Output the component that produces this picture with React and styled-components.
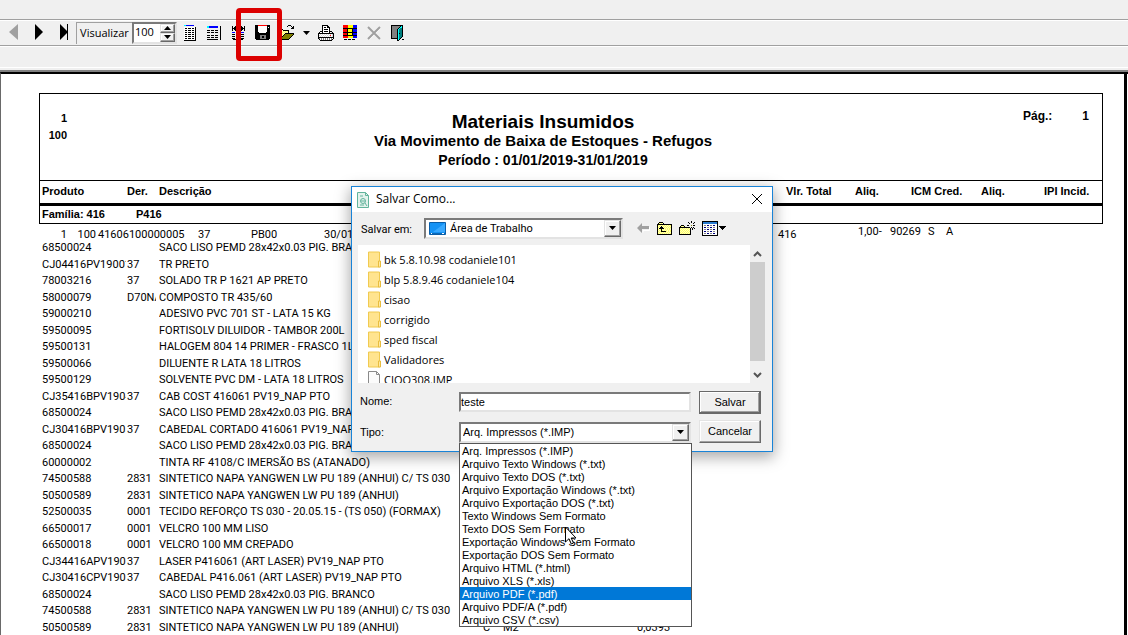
import React, { useState } from "react";
import styled, { createGlobalStyle, css } from "styled-components";

const GlobalStyle = createGlobalStyle`
  * {
    box-sizing: border-box;
  }
  body {
    background: #f0f0f0;
    color: #000;
    font-family: "Liberation Sans", Arial, sans-serif;
    font-size: 11px;
    margin: 0;
    overflow: hidden;
  }
  button,
  input,
  select {
    color: inherit;
    font-family: inherit;
    font-size: inherit;
  }
`;

const uiFont = css`
  font-family: "Open Sans", "Segoe UI", sans-serif;
`;

const textFont = css`
  font-family: Roboto, Arial, sans-serif;
`;

const sunken = css`
  background-color: #fff;
  border: 2px solid;
  border-color: #7a7a7a #e3e3e3 #e3e3e3 #7a7a7a;
`;

const raised = css`
  background-color: #f0f0f0;
  border: 1px solid;
  border-color: #e3e3e3 #696969 #696969 #e3e3e3;
  box-shadow: inset -1px -1px 0 #a0a0a0, inset 1px 1px 0 #fff;
`;

const Window = styled.div`
  display: flex;
  flex-direction: column;
  height: 100vh;
  position: relative;
`;

const Toolbar = styled.div`
  align-items: center;
  border-bottom: 1px solid #a0a0a0;
  border-top: 1px solid #a0a0a0;
  box-shadow: inset 0 1px 0 #fff, 0 1px 0 #fff;
  display: flex;
  flex: none;
  height: 27px;
  margin-top: 19px;
  padding-left: 2px;
`;

const ToolButton = styled.button`
  align-items: center;
  background: none;
  border: none;
  display: flex;
  height: 25px;
  justify-content: center;
  padding: 0;
  width: ${(props) => props.$width || 24}px;
`;

const ViewLabel = styled.label`
  ${uiFont}
  border-left: 1px solid #a0a0a0;
  border-top: 1px solid #a0a0a0;
  height: 22px;
  line-height: 20px;
  text-align: center;
  width: 56px;
`;

const ZoomBox = styled.div`
  ${sunken}
  display: flex;
  height: 22px;
  margin-right: 1px;
  width: 45px;
`;

const ZoomInput = styled.input`
  ${uiFont}
  background: none;
  border: none;
  flex: 1;
  line-height: 16px;
  min-width: 0;
  outline: none;
  padding: 0 0 2px 1px;
`;

const Spinner = styled.div`
  display: flex;
  flex-direction: column;
  width: 15px;
`;

const SpinButton = styled.button`
  ${raised}
  align-items: center;
  display: flex;
  flex: 1;
  justify-content: center;
  padding: 0;
`;

const Highlight = styled.div`
  border: 5px solid #dc0000;
  border-radius: 4px;
  height: 53px;
  left: 236px;
  position: absolute;
  top: 8px;
  width: 46px;
  z-index: 2;
`;

const Ruler = styled.div`
  border-bottom: 2px solid #808080;
  flex: none;
  height: 26px;
  padding-top: 21px;
`;

const RulerLine = styled.div`
  background: #fff;
  height: 1px;
`;

const Paper = styled.div`
  background: #fff;
  border-left: 1px solid #696969;
  border-top: 2px solid #000;
  flex: 1;
  overflow: hidden;
  padding-right: 1px;
`;

const Sheet = styled.main`
  border-right: 3px solid #000;
  min-height: 100%;
  padding: 19px 21px 0 38px;
`;

const ReportHead = styled.header`
  border: 1px solid #000;
  border-bottom: none;
  display: grid;
  font-weight: 700;
  grid-template-columns: 140px 1fr 140px;
  height: 87px;
`;

const CompanyCodes = styled.div`
  line-height: 17px;
  padding-top: 16px;
  text-align: right;
  width: 27px;
`;

const Titles = styled.div`
  padding: 18px 56px 0 0;
  text-align: center;
  white-space: nowrap;
`;

const Title = styled.h1`
  font-size: 19px;
  line-height: 20px;
  margin: 0;
`;

const Subtitle = styled.h2`
  font-size: 15px;
  line-height: 17px;
  margin: 0;
`;

const Period = styled.p`
  font-size: 14px;
  line-height: 22px;
  margin: 0;
`;

const PageNumber = styled.div`
  display: flex;
  font-size: 12px;
  gap: 30px;
  justify-content: flex-end;
  line-height: 16px;
  padding: 14px 13px 0 0;
`;

const Report = styled.table`
  border-collapse: separate;
  border-spacing: 0;
  table-layout: fixed;
  width: 100%;
`;

const HeadCell = styled.th`
  border-bottom: 3px solid #000;
  border-top: 1px solid #000;
  height: 26px;
  padding: 0 0 2px;
  text-align: left;
  vertical-align: middle;
  white-space: nowrap;
  &:first-child {
    border-left: 1px solid #000;
    padding-left: 2px;
  }
  &:last-child {
    border-right: 1px solid #000;
  }
`;

const FamilyCell = styled.td`
  border: 1px solid #000;
  border-top: none;
  font-weight: 700;
  height: 18px;
  padding: 0 0 2px 2px;
`;

const FamilyLine = styled.div`
  display: flex;
  gap: 31px;
`;

const MovementLine = styled.div`
  display: grid;
  grid-template-columns: 25px 29px 102px 53px 73px 1fr 80px 32px 38px 18px 157px;
  height: 16px;
  line-height: 21px;
  span:nth-child(-n + 2) {
    text-align: right;
  }
  span:nth-child(3) {
    padding-left: 2px;
  }
  span:nth-child(n + 8) {
    line-height: 16px;
  }
`;

const MaterialRow = styled.tr`
  height: ${(props) => (props.$tall ? 17 : 16)}px;
`;

const Cell = styled.td`
  ${textFont}
  line-height: 16px;
  overflow: hidden;
  padding: 0;
  white-space: nowrap;
  &:first-child {
    padding-left: 3px;
  }
`;

const Clip = styled.div`
  overflow: hidden;
  width: ${(props) => props.$width}px;
`;

const Dialog = styled.section`
  background: #f0f0f0;
  border: 1px solid #1883d7;
  box-shadow: 0 4px 14px 1px rgba(0, 0, 0, 0.35);
  height: 266px;
  left: 351px;
  position: absolute;
  top: 186px;
  width: 422px;
  z-index: 3;
`;

const TitleBar = styled.div`
  ${uiFont}
  align-items: center;
  background: #fff;
  display: flex;
  font-size: 12px;
  gap: 7px;
  height: 25px;
  padding: 0 9px 0 5px;
`;

const DialogTitle = styled.div`
  flex: 1;
  line-height: 24px;
  padding-bottom: 1px;
`;

const CloseButton = styled.button`
  background: none;
  border: none;
  display: flex;
  padding: 0 0 1px;
`;

const PlaceRow = styled.div`
  align-items: center;
  display: flex;
  height: 33px;
  padding: 0 8px 1px 9px;
`;

const PlaceLabel = styled.label`
  ${textFont}
  line-height: 15px;
  padding-top: 2px;
  width: 63px;
`;

const ComboBox = styled.div`
  ${sunken}
  align-items: center;
  display: flex;
  height: 21px;
  padding-left: ${(props) => props.$pad || 0}px;
  width: ${(props) => props.$width};
`;

const ComboSelect = styled.select`
  appearance: none;
  background: none;
  border: none;
  flex: 1;
  height: 17px;
  line-height: 17px;
  min-width: 0;
  outline: none;
  padding: 0 0 0 2px;
`;

const PlaceSelect = styled(ComboSelect)`
  ${textFont}
  padding-left: 4px;
`;

const ComboArrow = styled.span`
  ${raised}
  align-items: center;
  display: flex;
  height: 17px;
  justify-content: center;
  width: 17px;
`;

const PlaceTools = styled.div`
  align-items: center;
  display: flex;
  gap: 7px;
  margin-left: 14px;
`;

const PlaceTool = styled.button`
  background: none;
  border: none;
  display: flex;
  padding: 0;
`;

const FilePane = styled.div`
  background: #fff;
  display: flex;
  height: 138px;
  margin: 0 7px 0 6px;
`;

const FileList = styled.ul`
  ${uiFont}
  flex: 1;
  list-style: none;
  margin: 0;
  overflow: hidden;
  padding: 4px 0 0 10px;
`;

const FileItem = styled.li`
  align-items: center;
  display: flex;
  gap: 3px;
  height: 20px;
`;

const ScrollBar = styled.div`
  align-items: center;
  background: #f0f0f0;
  display: flex;
  flex-direction: column;
  width: 15px;
`;

const ScrollArrow = styled.span`
  align-items: center;
  display: flex;
  height: 17px;
`;

const ScrollThumb = styled.div`
  background: #cdcdcd;
  height: 99px;
  margin-bottom: auto;
  width: 15px;
`;

const DialogFooter = styled.div`
  display: flex;
  gap: 8px;
  padding: 8px 11px 0 8px;
`;

const Fields = styled.div`
  display: grid;
  flex: 1;
  gap: 9px 0;
  grid-template-columns: 99px 1fr;
`;

const FieldLabel = styled.label`
  line-height: 20px;
`;

const NameInput = styled.input`
  ${sunken}
  height: 20px;
  margin-top: 1px;
  outline: none;
  padding: 0;
  width: 100%;
`;

const Actions = styled.div`
  display: flex;
  flex-direction: column;
  gap: 6px;
  width: 62px;
`;

const DialogButton = styled.button`
  ${raised}
  height: 23px;
  padding: 0 0 1px;
  ${(props) =>
    props.$default &&
    css`
      border-color: #696969;
      box-shadow: inset -1px -1px 0 #696969, inset 1px 1px 0 #fff,
        inset -2px -2px 0 #a0a0a0;
    `}
`;

const TypeField = styled.div`
  position: relative;
`;

const Options = styled.ul`
  background: #fff;
  border: 1px solid #555;
  left: 0;
  list-style: none;
  margin: 0;
  padding: 0;
  position: absolute;
  top: 21px;
  width: 233px;
`;

const Option = styled.li`
  background: ${(props) => (props.$active ? "#0078d7" : "#fff")};
  color: ${(props) => (props.$active ? "#fff" : "#000")};
  height: 13px;
  line-height: 14px;
  padding-left: 2px;
  white-space: nowrap;
`;

const Pointer = styled.svg`
  left: 565px;
  position: absolute;
  top: 526px;
  z-index: 4;
`;

const palette = {
  k: "#000",
  w: "#fff",
  g: "#a0a0a0",
  d: "#808080",
  l: "#d8d8d8",
  b: "#0000ff",
  n: "#000080",
  c: "#00ffff",
  t: "#008080",
  r: "#ff0000",
  y: "#ffff00",
  e: "#ffff66",
  p: "#ffffc0",
  o: "#808000",
  s: "#2a7bd0",
};

// every character is one pixel, a dot is transparent
const PixelIcon = ({ rows }) => (
  <svg
    width={rows[0].length}
    height={rows.length}
    shapeRendering="crispEdges"
    aria-hidden="true"
  >
    {rows.map((row, y) =>
      [...row].map(
        (ch, x) =>
          palette[ch] && (
            <rect
              key={`${x}-${y}`}
              x={x}
              y={y}
              width="1"
              height="1"
              fill={palette[ch]}
            />
          )
      )
    )}
  </svg>
);

const listIcon = [
  "ccbbbbbbbb..",
  "............",
  "wwwwwwwwwwwk",
  "wkkwkkkwkkwk",
  "wwwwwwwwwwwk",
  "wkkwkkkwkkwk",
  "wwwwwwwwwwwk",
  "wkkwkkkwkkwk",
  "wwwwwwwwwwwk",
  "wkkwkkkwkkwk",
  "wwwwwwwwwwwk",
  "wkkwkkkwkkwk",
  "wwwwwwwwwwwk",
  "wkkwkkkwkkwk",
  "wwwwwwwwwwwk",
  "kkkkkkkkkkkk",
];

const columnsIcon = [
  "ccbbbbbbbbb..k",
  "ccbbbbbbbbb..k",
  ".............k",
  ".............k",
  "kkk.kkk.kkk..k",
  ".............k",
  "kkk.kkk.kkk..k",
  ".............k",
  ".............k",
  "kkk.kkk.kkk..k",
  ".............k",
  "kkk.kkk.kkk..k",
  ".............k",
  "kkkkkkkkkkk..k",
];

const widthIcon = [
  "k..k.....k..k",
  "k.kk.....kk.k",
  "kkkkkk.kkkkkk",
  "k.kk.....kk.k",
  "k..k.....k..k",
  ".............",
  "bbb.bbbb.bbb.",
  ".............",
  "kkk.kkkk.kkk.",
  ".............",
  "kkk.kkkk.kkk.",
  ".............",
  "kkk.kkkk.kkk.",
  ".kkkkkkkkkk..",
];

const saveIcon = [
  "kkkrrrrrrrrrkkk",
  "kkkwwwwwwwwwkkk",
  "kkkwwwwwwwwwkwk",
  "kkkwwwwwwwwwkkk",
  "kkkwwwwwwwwwkkk",
  "kkkwwwwwwwwwkkk",
  "kkkwwwwwwwwwkkk",
  "kkkkwwwwwwwkkkk",
  "kkkkkkkkkkkkkkk",
  "kkkkkkkkkkkkkkk",
  "kkkkkddddddkkkk",
  "kkkkkddkkddkkkk",
  "kkkkkddkkddkkkk",
  "kkkkkddddddkkkk",
  ".kkkkkkkkkkkkk.",
];

const openIcon = [
  ".........kkk...",
  "........k...k.k",
  ".............kk",
  "............kkk",
  ".kkk...........",
  "keepkkkkkk.....",
  "kpepepepek.....",
  "kepepepepk.....",
  "kpepepkkkkkkkkk",
  "kepepkooooooook",
  "kpepkooooooook.",
  "kepkooooooook..",
  "kpkooooooook...",
  "kkooooooook....",
  "kkkkkkkkkk.....",
];

const printIcon = [
  "....kkkkkk......",
  "....kwwwwkk.....",
  "....kwkkwkkk....",
  "....kwwwwwwk....",
  "....kwkkkkwk....",
  "....kwwwwwwk....",
  "..kkkwkkkkwkkk..",
  ".kwwkwwwwwwkwlk.",
  "kkkkkkkkkkkkkkkk",
  "kwlwlwlwlwlwlwlk",
  "klwlwlwlwlwlrwlk",
  "kwlwlwlwlwlwlwlk",
  "kkkkkkkkkkkkkkkk",
  "kdwdwdwdwdwdwdwk",
  ".kwdwdwdwdwdwdk.",
  "..kkkkkkkkkkkk..",
];

const colorsIcon = [
  "rrrrryyyyybbbb",
  "rrrrryyyyybbbb",
  "rrrrryyyyybbbb",
  "kkkkkkkkkkkkkk",
  "rrrrkyyyykbbbb",
  "rrrrkyyyykbbbb",
  "rrrrkyyyykbbbb",
  "kkkkkkkkkkkkkk",
  "rrrrkyyyykbbbb",
  "rrrrkyyyykbbbb",
  "kkkkkkkkkkkkkk",
  "rrrrryyyyybbbb",
  "rrrrryyyyybbbb",
  "..............",
  ".kkk.kkk.kkk..",
];

const exitIcon = [
  "kkkkkkkkkkkk..",
  "kddddddddkck..",
  "kdddddddkcck..",
  "kddddddkcttk..",
  "kdddddkctttk..",
  "kdddddkctttk..",
  "kdddddkctttk..",
  "kdddddkctttk..",
  "kdddddkckttk..",
  "kdddddkctttk..",
  "kdddddkctttk..",
  "kdddddkctttk..",
  "kdddddkcttk...",
  "kkkkkkkctk....",
  "......kck..kk.",
  "......kk......",
];

const upIcon = [
  "..kkkk.........",
  ".kepepk........",
  "kkkkkkkkkkkkkkk",
  "kepepepepepepek",
  "kpepkpepepepepk",
  "kepkkkpepepepek",
  "kpkkkkkpepepepk",
  "kepekpepepepepk",
  "kpepkepepepepek",
  "kepekkkkkepepek",
  "kpepepepepepepk",
  "kepepepepepepek",
  "kkkkkkkkkkkkkkk",
];

const newFolderIcon = [
  "............k...",
  ".........k..k..k",
  "..........k...k.",
  "................",
  "..kkk...kk..o.kk",
  ".kepek..........",
  "kkkkkkkkkkk.k.k.",
  "kepepepepepk.k.k",
  "kpepepepepek.k..",
  "kepepepepepk....",
  "kpepepepepek....",
  "kepepepepepk....",
  "kpepepepepek....",
  "kkkkkkkkkkkk....",
];

const viewIcon = [
  "kkkkkkkkkkkkkkkk........",
  "kssssssssssssssk........",
  "kssssssssssssssk........",
  "kwwwwwwwwwwwwwwk........",
  "kwddwnnwddwnnwwk........",
  "kwwwwwwwwwwwwwwk.kkkkkkk",
  "kwnnwddwnnwddwwk..kkkkk.",
  "kwwwwwwwwwwwwwwk...kkk..",
  "kwddwnnwddwnnwwk....k...",
  "kwwwwwwwwwwwwwwk........",
  "kwnnwddwnnwddwwk........",
  "kwwwwwwwwwwwwwwk........",
  "kwddwnnwddwnnwwk........",
  "kwwwwwwwwwwwwwwk........",
  "kkkkkkkkkkkkkkkk........",
];

const Triangle = ({ up }) => (
  <svg width="7" height="4" viewBox="0 0 7 4" aria-hidden="true">
    <path d={up ? "M0 4 3.5 0 7 4z" : "M0 0h7L3.5 4z"} />
  </svg>
);

const PlayIcon = ({ back, last }) => (
  <svg width="10" height="17" viewBox="0 0 10 17" aria-hidden="true">
    <path
      d={back ? "M9 0v16L0 8z" : "M1 0v16l8-8z"}
      fill={back ? "#a0a0a0" : "#000"}
    />
    {last && <path d="M8 0h1v16H8z" />}
  </svg>
);

const FolderIcon = () => (
  <svg width="13" height="17" viewBox="0 0 13 17" aria-hidden="true">
    <path d="M.5 1h11v15H.5z" fill="#ffe48f" stroke="#f0ca50" />
    <path d="M10.5 10h2v6h-2z" fill="#ffe9a2" stroke="#e8bd3f" />
  </svg>
);

const FileIcon = () => (
  <svg width="13" height="17" viewBox="0 0 13 17" aria-hidden="true">
    <path d="M.5.5h8l3 3V17H.5z" fill="#fbfbfb" stroke="#8a8a8a" />
    <path d="M8.5.5v3h3" fill="none" stroke="#8a8a8a" />
  </svg>
);

const materials = [
  ["68500024", "", "SACO LISO PEMD 28x42x0.03 PIG. BRANCO"],
  ["CJ04416PV19001", "37", "TR PRETO"],
  ["78003216", "37", "SOLADO TR P 1621 AP PRETO"],
  ["58000079", "D70NA", "COMPOSTO TR 435/60"],
  ["59000210", "", "ADESIVO PVC 701 ST - LATA 15 KG"],
  ["59500095", "", "FORTISOLV DILUIDOR - TAMBOR 200L"],
  ["59500131", "", "HALOGEM 804 14 PRIMER - FRASCO 1L"],
  ["59500066", "", "DILUENTE R LATA 18 LITROS"],
  ["59500129", "", "SOLVENTE PVC DM - LATA 18 LITROS"],
  ["CJ35416BPV1904", "37", "CAB COST 416061 PV19_NAP PTO"],
  ["68500024", "", "SACO LISO PEMD 28x42x0.03 PIG. BRANCO"],
  ["CJ30416BPV1905", "37", "CABEDAL CORTADO 416061 PV19_NAP PTO"],
  ["68500024", "", "SACO LISO PEMD 28x42x0.03 PIG. BRANCO"],
  ["60000002", "", "TINTA RF 4108/C IMERSÃO BS (ATANADO)"],
  ["74500588", "2831", "SINTETICO NAPA YANGWEN LW PU 189 (ANHUI) C/ TS 030"],
  ["50500589", "2831", "SINTETICO NAPA YANGWEN LW PU 189 (ANHUI)"],
  ["52500035", "0001", "TECIDO REFORÇO TS 030 - 20.05.15 - (TS 050) (FORMAX)"],
  ["66500017", "0001", "VELCRO 100 MM LISO"],
  ["66500018", "0001", "VELCRO 100 MM CREPADO"],
  ["CJ34416APV1905", "37", "LASER P416061 (ART LASER) PV19_NAP PTO"],
  ["CJ30416CPV1905", "37", "CABEDAL P416.061 (ART LASER) PV19_NAP PTO"],
  ["68500024", "", "SACO LISO PEMD 28x42x0.03 PIG. BRANCO"],
  ["74500588", "2831", "SINTETICO NAPA YANGWEN LW PU 189 (ANHUI) C/ TS 030"],
  ["50500589", "2831", "SINTETICO NAPA YANGWEN LW PU 189 (ANHUI)", "C", "M2", "0,0393"],
];

const folders = [
  "bk 5.8.10.98 codaniele101",
  "blp 5.8.9.46 codaniele104",
  "cisao",
  "corrigido",
  "sped fiscal",
  "Validadores",
];

const fileTypes = [
  "Arq. Impressos (*.IMP)",
  "Arquivo Texto Windows (*.txt)",
  "Arquivo Texto DOS (*.txt)",
  "Arquivo Exportação Windows (*.txt)",
  "Arquivo Exportação DOS (*.txt)",
  "Texto Windows Sem Formato",
  "Texto DOS Sem Formato",
  "Exportação Windows Sem Formato",
  "Exportação DOS Sem Formato",
  "Arquivo HTML (*.html)",
  "Arquivo XLS (*.xls)",
  "Arquivo PDF (*.pdf)",
  "Arquivo PDF/A (*.pdf)",
  "Arquivo CSV (*.csv)",
];

const columnWidths = [88, 32, 324, 20, 134, null, 69, 56, 70, 63, 59];

const PreviewToolbar = () => {
  const [zoom, setZoom] = useState(100);

  return (
    <Toolbar>
      <ToolButton aria-label="Anterior">
        <PlayIcon back />
      </ToolButton>
      <ToolButton $width={26} aria-label="Próxima">
        <PlayIcon />
      </ToolButton>
      <ToolButton aria-label="Última">
        <PlayIcon last />
      </ToolButton>
      <ViewLabel htmlFor="zoom">Visualizar</ViewLabel>
      <ZoomBox>
        <ZoomInput
          id="zoom"
          value={zoom}
          onChange={(e) => setZoom(Number(e.target.value) || 0)}
        />
        <Spinner>
          <SpinButton aria-label="Aumentar" onClick={() => setZoom(zoom + 1)}>
            <Triangle up />
          </SpinButton>
          <SpinButton aria-label="Diminuir" onClick={() => setZoom(zoom - 1)}>
            <Triangle />
          </SpinButton>
        </Spinner>
      </ZoomBox>
      <ToolButton aria-label="Página">
        <PixelIcon rows={listIcon} />
      </ToolButton>
      <ToolButton aria-label="Colunas">
        <PixelIcon rows={columnsIcon} />
      </ToolButton>
      <ToolButton aria-label="Largura">
        <PixelIcon rows={widthIcon} />
      </ToolButton>
      <ToolButton aria-label="Salvar">
        <PixelIcon rows={saveIcon} />
      </ToolButton>
      <ToolButton aria-label="Abrir">
        <PixelIcon rows={openIcon} />
      </ToolButton>
      <ToolButton $width={16} aria-label="Recentes">
        <Triangle />
      </ToolButton>
      <ToolButton aria-label="Imprimir">
        <PixelIcon rows={printIcon} />
      </ToolButton>
      <ToolButton aria-label="Cores">
        <PixelIcon rows={colorsIcon} />
      </ToolButton>
      <ToolButton aria-label="Cancelar impressão">
        <svg width="14" height="14" viewBox="0 0 14 14" aria-hidden="true">
          <path d="m2 2 11 11M13 2 2 13" stroke="#fff" strokeWidth="2" />
          <path d="m1 1 12 12M13 1 1 13" stroke="#a0a0a0" strokeWidth="2" />
        </svg>
      </ToolButton>
      <ToolButton aria-label="Sair">
        <PixelIcon rows={exitIcon} />
      </ToolButton>
    </Toolbar>
  );
};

const ReportSheet = () => (
  <Paper>
    <Sheet>
      <ReportHead>
        <CompanyCodes>
          <div>1</div>
          <div>100</div>
        </CompanyCodes>
        <Titles>
          <Title>Materiais Insumidos</Title>
          <Subtitle>Via Movimento de Baixa de Estoques - Refugos</Subtitle>
          <Period>Período : 01/01/2019-31/01/2019</Period>
        </Titles>
        <PageNumber>
          <span>Pág.:</span>
          <span>1</span>
        </PageNumber>
      </ReportHead>
      <Report aria-label="Materiais Insumidos">
        <colgroup>
          {columnWidths.map((width, i) => (
            <col key={i} width={width || undefined} />
          ))}
        </colgroup>
        <thead>
          <tr>
            <HeadCell>Produto</HeadCell>
            <HeadCell>Der.</HeadCell>
            <HeadCell>Descrição</HeadCell>
            <HeadCell />
            <HeadCell />
            <HeadCell />
            <HeadCell>Vlr. Total</HeadCell>
            <HeadCell>Aliq.</HeadCell>
            <HeadCell>ICM Cred.</HeadCell>
            <HeadCell>Aliq.</HeadCell>
            <HeadCell>IPI Incid.</HeadCell>
          </tr>
        </thead>
        <tbody>
          <tr>
            <FamilyCell colSpan={11}>
              <FamilyLine>
                <span>Família: 416</span>
                <span>P416</span>
              </FamilyLine>
            </FamilyCell>
          </tr>
          <tr>
            <Cell colSpan={11}>
              <MovementLine>
                <span>1</span>
                <span>100</span>
                <span>41606100000005</span>
                <span>37</span>
                <span>PB00</span>
                <span>30/01</span>
                <span>416</span>
                <span>1,00-</span>
                <span>90269</span>
                <span>S</span>
                <span>A</span>
              </MovementLine>
            </Cell>
          </tr>
          {materials.map(([code, der, desc, kind, unit, qty], i) => (
            <MaterialRow key={i} $tall={i % 2 === 1}>
              <Cell>
                <Clip $width={84}>{code}</Clip>
              </Cell>
              <Cell>
                <Clip $width={29}>{der}</Clip>
              </Cell>
              <Cell>{desc}</Cell>
              <Cell>{kind}</Cell>
              <Cell>{unit}</Cell>
              <Cell colSpan={6}>{qty}</Cell>
            </MaterialRow>
          ))}
        </tbody>
      </Report>
    </Sheet>
  </Paper>
);

const SaveDialog = () => {
  const [name, setName] = useState("teste");
  const [type, setType] = useState(fileTypes[0]);
  const [active, setActive] = useState(11);

  return (
    <Dialog role="dialog" aria-label="Salvar Como...">
      <TitleBar>
        <svg width="12" height="16" viewBox="0 0 12 16" aria-hidden="true">
          <path d="M.5.5h8l3 3v12H.5z" fill="#e3f2ec" stroke="#62b49c" />
          <path d="M8.5.5v3h3M3 4h3" fill="none" stroke="#62b49c" />
          <circle cx="6" cy="9" r="2.5" fill="none" stroke="#62b49c" />
          <path d="M4 9h4M8 11l2 3M3 13h4" stroke="#62b49c" />
        </svg>
        <DialogTitle>Salvar Como...</DialogTitle>
        <CloseButton aria-label="Fechar">
          <svg width="12" height="12" viewBox="0 0 12 12" aria-hidden="true">
            <path d="m1 1 10 10M11 1 1 11" stroke="#000" />
          </svg>
        </CloseButton>
      </TitleBar>
      <PlaceRow>
        <PlaceLabel htmlFor="place">Salvar em:</PlaceLabel>
        <ComboBox $width="199px" $pad={3}>
          <svg width="17" height="13" viewBox="0 0 17 13" aria-hidden="true">
            <path d="M.5.5h16v12H.5z" fill="#1593f5" stroke="#0a5ea8" />
            <path d="M16 1v9H4z" fill="#39a9ff" />
            <path d="M1 11.5h15" stroke="#0b69b8" />
            <path d="M2 11.5h1M13 11.5h2" stroke="#fff" />
          </svg>
          <PlaceSelect id="place" defaultValue="desktop">
            <option value="desktop">Área de Trabalho</option>
          </PlaceSelect>
          <ComboArrow>
            <Triangle />
          </ComboArrow>
        </ComboBox>
        <PlaceTools>
          <PlaceTool aria-label="Voltar">
            <svg width="13" height="10" viewBox="0 0 13 10" aria-hidden="true">
              <path d="M6 9.5v-2h6.5V4" fill="none" stroke="#fff" />
              <path d="M0 5l5-5v3h7v3H5v4z" fill="#a0a0a0" />
            </svg>
          </PlaceTool>
          <PlaceTool aria-label="Um nível acima">
            <PixelIcon rows={upIcon} />
          </PlaceTool>
          <PlaceTool aria-label="Nova pasta">
            <PixelIcon rows={newFolderIcon} />
          </PlaceTool>
          <PlaceTool aria-label="Exibir">
            <PixelIcon rows={viewIcon} />
          </PlaceTool>
        </PlaceTools>
      </PlaceRow>
      <FilePane>
        <FileList>
          {folders.map((folder) => (
            <FileItem key={folder}>
              <FolderIcon />
              {folder}
            </FileItem>
          ))}
          <FileItem>
            <FileIcon />
            CIOO308.IMP
          </FileItem>
        </FileList>
        <ScrollBar>
          <ScrollArrow>
            <svg width="9" height="6" viewBox="0 0 9 6" aria-hidden="true">
              <path d="M1 5l3.5-3.5L8 5" fill="none" stroke="#555" strokeWidth="2" />
            </svg>
          </ScrollArrow>
          <ScrollThumb />
          <ScrollArrow>
            <svg width="9" height="6" viewBox="0 0 9 6" aria-hidden="true">
              <path d="M1 1l3.5 3.5L8 1" fill="none" stroke="#555" strokeWidth="2" />
            </svg>
          </ScrollArrow>
        </ScrollBar>
      </FilePane>
      <DialogFooter>
        <Fields>
          <FieldLabel htmlFor="name">Nome:</FieldLabel>
          <NameInput
            id="name"
            value={name}
            onChange={(e) => setName(e.target.value)}
          />
          <FieldLabel htmlFor="type">Tipo:</FieldLabel>
          <TypeField>
            <ComboBox $width="100%">
              <ComboSelect
                id="type"
                value={type}
                onChange={(e) => setType(e.target.value)}
              >
                {fileTypes.map((item) => (
                  <option key={item}>{item}</option>
                ))}
              </ComboSelect>
              <ComboArrow>
                <Triangle />
              </ComboArrow>
            </ComboBox>
            <Options role="listbox" aria-label="Tipo">
              {fileTypes.map((item, i) => (
                <Option
                  key={item}
                  role="option"
                  aria-selected={i === active}
                  $active={i === active}
                  onMouseEnter={() => setActive(i)}
                  onClick={() => setType(item)}
                >
                  {item}
                </Option>
              ))}
            </Options>
          </TypeField>
        </Fields>
        <Actions>
          <DialogButton $default>Salvar</DialogButton>
          <DialogButton>Cancelar</DialogButton>
        </Actions>
      </DialogFooter>
    </Dialog>
  );
};

const App = () => (
  <>
    <GlobalStyle />
    <Window>
      <PreviewToolbar />
      <Highlight />
      <Ruler>
        <RulerLine />
      </Ruler>
      <ReportSheet />
      <SaveDialog />
      <Pointer width="12" height="19" viewBox="0 0 12 19" aria-hidden="true">
        <path
          d="M.5 1v15L4 12.7 6.300 18l2.200-1-2.300-5H11z"
          fill="#fff"
          stroke="#000"
        />
      </Pointer>
    </Window>
  </>
);

export default App;
